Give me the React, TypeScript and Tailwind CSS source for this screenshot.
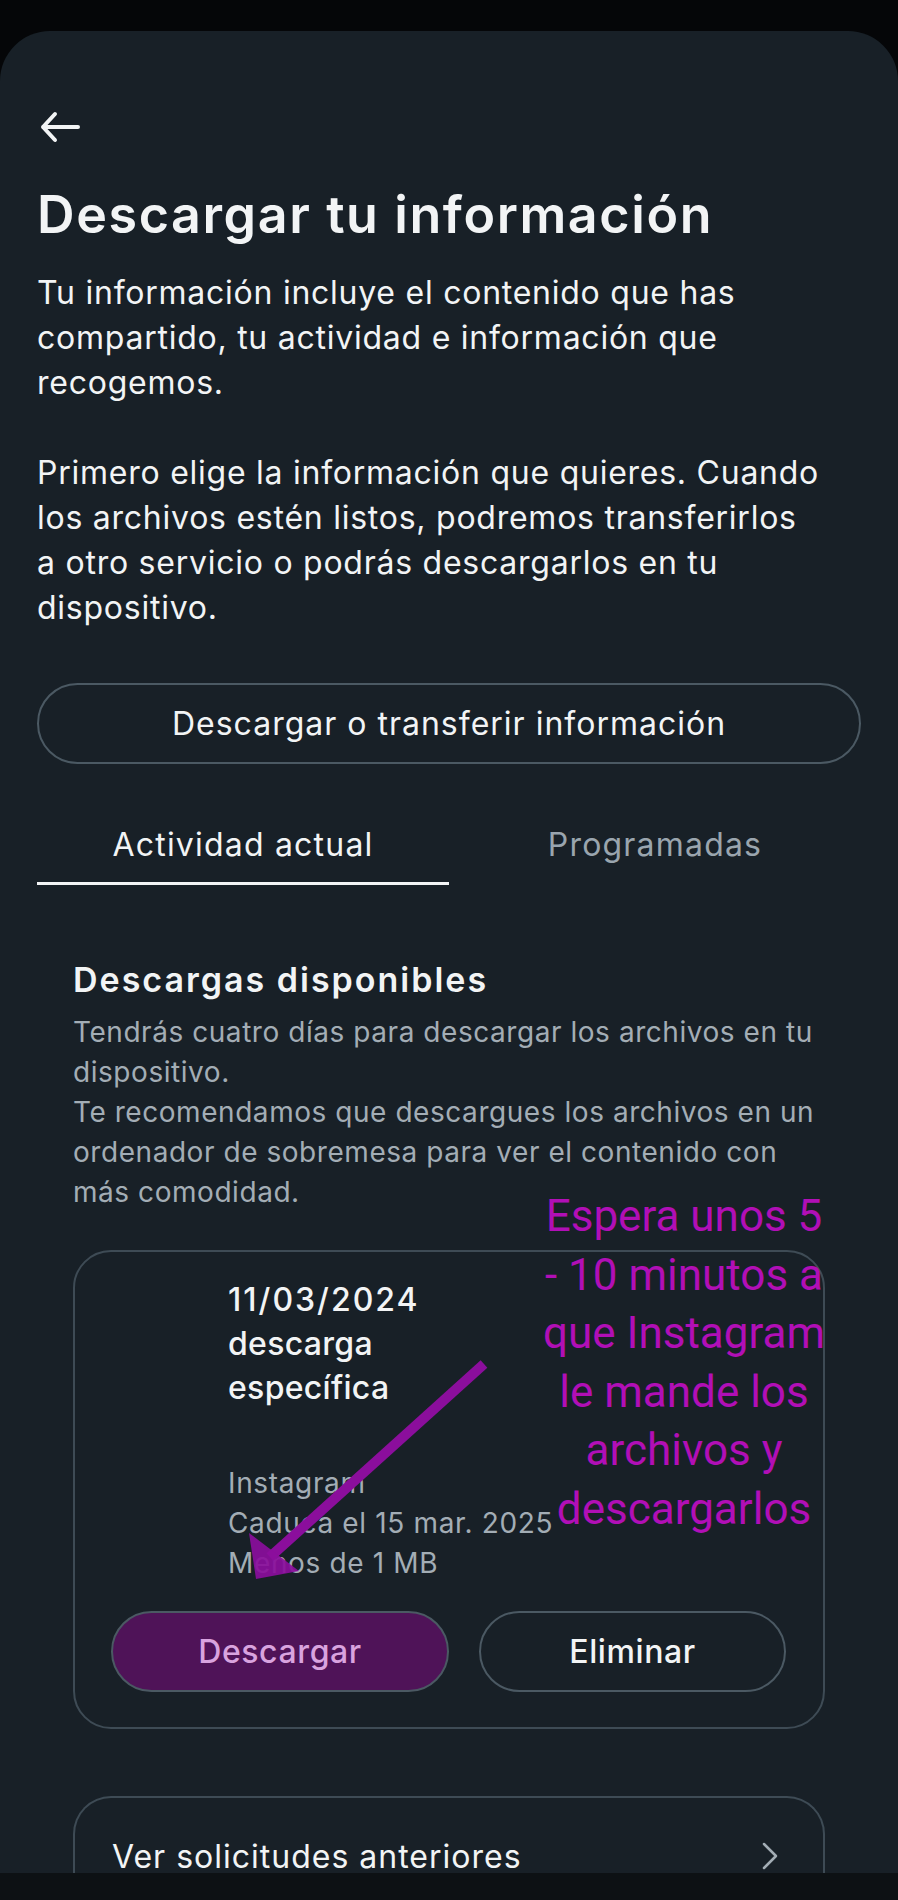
import React from 'react'

const font = { fontFamily: 'Inter, "Noto Sans", sans-serif' }

function BackArrow() {
  return (
    <svg width="40" height="32" viewBox="0 0 40 32" fill="none">
      <path d="M3 16H38M15 3L3 16L15 29" stroke="#f2f4f5" strokeWidth="4" strokeLinecap="round" strokeLinejoin="round" />
    </svg>
  )
}

function Annotation() {
  return (
    <>
      {/* hand-drawn arrow */}
      <svg className="absolute left-0 top-0 pointer-events-none" width="898" height="1900" viewBox="0 0 898 1900">
        <line x1="484" y1="1364" x2="270" y2="1557" stroke="#8b0e9c" strokeWidth="10" />
        <polygon points="256,1579 249,1533 299,1571" fill="#8b0e9c" fillOpacity="0.92" />
      </svg>
      <div
        className="absolute left-[534px] top-[1187px] w-[300px] text-center text-[44px] leading-[58.6px] text-[#b10fb6] pointer-events-none"
        style={{ fontFamily: 'Roboto, sans-serif' }}
      >
        Espera unos 5<br />- 10 minutos a<br />que Instagram<br />le mande los<br />archivos y<br />descargarlos
      </div>
    </>
  )
}

export default function App() {
  return (
    <div className="relative h-[1900px] overflow-hidden bg-[#050608] pt-[31px]" style={font}>
      <div className="h-full rounded-t-[50px] bg-[#182027] px-[37px] pt-[76px] text-[#f2f4f5]">
        {/* Header */}
        <div className="h-[40px] flex items-center pl-[3px]">
          <BackArrow />
        </div>
        <h1 className="mt-[38px] text-[52px] leading-[60px] font-semibold tracking-[1.6px]">Descargar tu información</h1>
        <p className="mt-[25px] text-[32px] leading-[45px] tracking-[0.75px]">
          Tu información incluye el contenido que has
          <br />compartido, tu actividad e información que
          <br />recogemos.
          <br />
          <br />Primero elige la información que quieres. Cuando
          <br />los archivos estén listos, podremos transferirlos
          <br />a otro servicio o podrás descargarlos en tu
          <br />dispositivo.
        </p>

        <button className="mt-[53px] w-full h-[81px] rounded-full border-2 border-[#4b5963] text-[32px] tracking-[1px]">
          Descargar o transferir información
        </button>

        {/* Tabs */}
        <div className="mt-[36px] grid grid-cols-2 text-[32px] leading-[45px] tracking-[1.2px]">
          <div className="pt-[22px] pb-[15px] text-center border-b-[3px] border-[#f2f4f5]">Actividad actual</div>
          <div className="pt-[22px] pb-[15px] text-center text-[#9aa5ae] border-b-[3px] border-transparent">Programadas</div>
        </div>

        {/* Available downloads */}
        <section className="px-[36px]">
          <h2 className="mt-[73px] text-[34px] leading-[44px] font-semibold tracking-[2px]">Descargas disponibles</h2>
          <p className="mt-[10px] text-[28px] leading-[40px] text-[#a3adb5] tracking-[0.55px]">
            Tendrás cuatro días para descargar los archivos en tu
            <br />dispositivo.
            <br />Te recomendamos que descargues los archivos en un
            <br />ordenador de sobremesa para ver el contenido con
            <br />más comodidad.
          </p>

          <div className="mt-[38px] rounded-[38px] border-2 border-[#3e4b55] px-[36px] pt-[26px] pb-[35px]">
            <div className="ml-[117px]">
              <div className="text-[32px] leading-[44px] font-medium tracking-[0.3px]">
                <span className="tracking-[2px]">11/03/2024</span>
                <br />descarga
                <br />específica
              </div>
              <div className="mt-[53px] text-[28px] leading-[40px] text-[#a3adb5] tracking-[0.65px]">
                Instagram
                <br />Caduca el 15 mar. 2025
                <br />Menos de 1 MB
              </div>
            </div>
            <div className="mt-[28px] flex gap-[30px] text-[32px] font-medium tracking-[0.6px]">
              <button className="w-[338px] h-[81px] rounded-full border-2 border-[#4b5963] bg-[#4f1358] text-[#d9a3df]">
                Descargar
              </button>
              <button className="w-[307px] h-[81px] rounded-full border-2 border-[#4b5963]">
                Eliminar
              </button>
            </div>
          </div>

          <div className="mt-[67px] rounded-t-[38px] border-2 border-b-0 border-[#3e4b55] h-[120px] pl-[37px] pr-[44px] pt-[36px] flex items-start justify-between">
            <span className="text-[32px] leading-[45px] tracking-[1px]">Ver solicitudes anteriores</span>
            <svg width="18" height="28" viewBox="0 0 18 28" className="mt-[8px]" fill="none">
              <path d="M3 2L15 14L3 26" stroke="#a3adb5" strokeWidth="2.5" strokeLinecap="round" strokeLinejoin="round" />
            </svg>
          </div>
        </section>
      </div>

      <Annotation />

      {/* system nav bar */}
      <div className="absolute left-0 right-0 bottom-0 h-[27px] bg-[#0d1114]" />
    </div>
  )
}
